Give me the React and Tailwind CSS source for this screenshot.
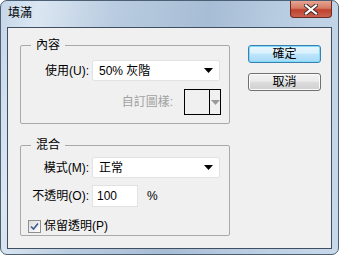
import React from "react";

const font = "font-['Liberation_Sans','Noto_Sans_CJK_TC',sans-serif]";

function Caret({ color = "#000" }) {
  return (
    <svg width="9" height="5" viewBox="0 0 9 5">
      <path d="M0 0 H9 L4.5 5 Z" fill={color} />
    </svg>
  );
}

function Select({ value }) {
  return (
    <div className="w-[128px] h-[21px] bg-white border border-[#e2e2e2] rounded-[2px] flex items-center pl-[6px] pr-[6px] justify-between">
      <span className="text-[12px] leading-none text-black">{value}</span>
      <Caret />
    </div>
  );
}

function Group({ title, children, className }) {
  return (
    <fieldset className={`border border-[#a9a9a9] rounded-[2px] w-[210px] ${className}`}>
      <legend className="ml-[10px] px-[5px] text-[12px] leading-[14px] text-black">{title}</legend>
      {children}
    </fieldset>
  );
}

export default function App() {
  return (
    <div className={`w-[339px] h-[255px] overflow-hidden bg-white ${font}`}>
      <div className="w-[339px] h-[255px] rounded-[7px] border border-[#4d5f73] bg-[linear-gradient(100deg,#c4d6e9_0%,#dbe6f2_10%,#b9cce0_30%,#a7bdd5_55%,#b9cde2_75%,#c8d9ea_100%)] flex flex-col">
        <div className="h-[26px] flex justify-between">
          <div className="pl-[7px] pt-[5px] text-[12px] leading-[14px] text-black">填滿</div>
          <div className="mr-[6px] w-[42px] h-[17px] rounded-b-[4px] border border-t-0 border-[#6b2a22] bg-[linear-gradient(180deg,#e6a592_0%,#d47a64_45%,#c0422d_55%,#c96250_100%)] flex items-center justify-center">
            <svg width="14" height="11" viewBox="0 0 14 11">
              <path d="M2 1.5 L12 9.5 M12 1.5 L2 9.5" stroke="#3a2a2a" strokeWidth="4" strokeLinecap="square" />
              <path d="M2 1.5 L12 9.5 M12 1.5 L2 9.5" stroke="#ffffff" strokeWidth="2.2" strokeLinecap="square" />
            </svg>
          </div>
        </div>
        <div className="ml-[6px] mr-[6px] h-[222px] border border-[#3f4f61] bg-[#f0f0f0] flex">
          <div className="pl-[12px] pt-[10px] flex flex-col gap-[14px]">
            <Group title="內容" className="h-[86px]">
              <div className="pl-[4px] pt-[8px] flex items-center">
                <div className="w-[64px] text-right text-[12px] text-black">使用(U):</div>
                <div className="ml-[3px]"><Select value="50% 灰階" /></div>
              </div>
              <div className="mt-[8px] flex items-center justify-end pr-[8px]">
                <div className="text-[12px] text-[#a0a0a0] mr-[11px]">自訂圖樣:</div>
                <div className="w-[37px] h-[26px] border border-black bg-[#f0f0f0] flex">
                  <div className="w-[25px] border-r border-black"></div>
                  <div className="flex-1 flex items-center justify-center"><Caret color="#9a9a9a" /></div>
                </div>
              </div>
            </Group>
            <Group title="混合" className="h-[98px]">
              <div className="pl-[4px] pt-[5px] flex items-center">
                <div className="w-[64px] text-right text-[12px] text-black">模式(M):</div>
                <div className="ml-[3px]"><Select value="正常" /></div>
              </div>
              <div className="pl-[4px] mt-[7px] flex items-center">
                <div className="w-[64px] text-right text-[12px] text-black">不透明(O):</div>
                <div className="ml-[3px] w-[46px] h-[22px] bg-white border border-[#e2e2e2] flex items-center pl-[4px] text-[12px] text-black">100</div>
                <div className="ml-[9px] text-[12px] text-black">%</div>
              </div>
              <div className="pl-[7px] mt-[10px] flex items-center">
                <div className="w-[13px] h-[13px] border border-[#8f8f8f] bg-[linear-gradient(135deg,#dcdcdc,#ffffff)] flex items-center justify-center">
                  <svg width="9" height="9" viewBox="0 0 9 9">
                    <path d="M1 4.5 L3.5 7 L8 1.5" stroke="#3d5a96" strokeWidth="1.6" fill="none" />
                  </svg>
                </div>
                <div className="ml-[3px] text-[12px] text-black">保留透明(P)</div>
              </div>
            </Group>
          </div>
          <div className="ml-[18px] pt-[17px] flex flex-col gap-[10px]">
            <div className="w-[73px] h-[18px] rounded-[3px] border border-[#3c7fb1] shadow-[0_0_0_1px_#7ddcf8_inset] bg-[linear-gradient(180deg,#eaf6fd_0%,#d9f0fc_45%,#bee6fd_50%,#a7d9f5_100%)] flex items-center justify-center text-[12px] text-black">確定</div>
            <div className="w-[73px] h-[18px] rounded-[3px] border border-[#707070] shadow-[0_0_0_1px_#fcfcfc_inset] bg-[linear-gradient(180deg,#f2f2f2_0%,#ebebeb_45%,#dddddd_50%,#cfcfcf_100%)] flex items-center justify-center text-[12px] text-black">取消</div>
          </div>
        </div>
      </div>
    </div>
  );
}
